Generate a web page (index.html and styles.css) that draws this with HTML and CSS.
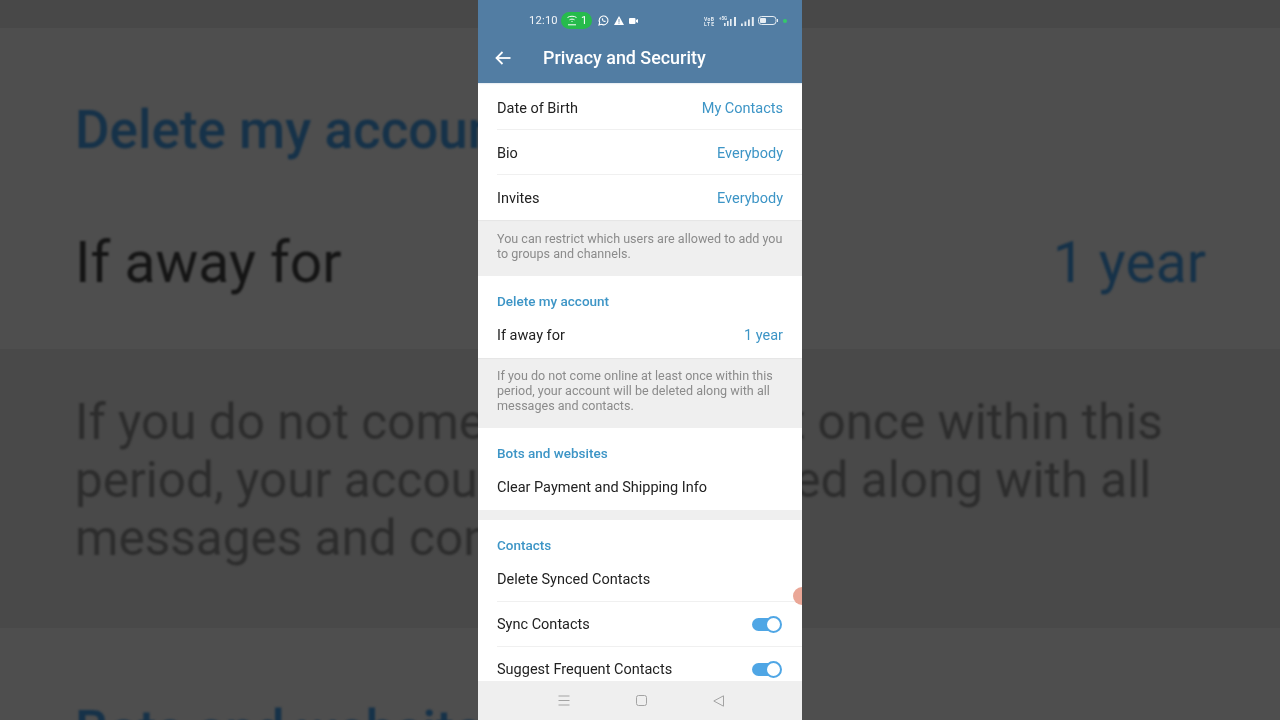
FILE: index.html
```html
<!DOCTYPE html>
<html lang="en">
<head>
<meta charset="utf-8">
<title>Privacy and Security</title>
<link rel="stylesheet" href="styles.css">
</head>
<body>
<div class="stage">
  <div class="backdrop">
    <div class="band band-top"></div>
    <div class="band band-account">
      <div class="bg-heading">Delete my account</div>
      <div class="bg-row"><span>If away for</span><span class="bg-value">1 year</span></div>
    </div>
    <div class="band band-note">
      <p class="bg-note">If you do not come online at least once within this period, your account will be deleted along with all messages and contacts.</p>
    </div>
    <div class="band band-bots">
      <div class="bg-heading">Bots and websites</div>
    </div>
  </div>

  <main class="phone">
    <header class="appbar">
      <div class="status">
        <div class="status-left">
          <span class="clock">12:10</span>
          <span class="pill">
            <svg width="12" height="11" viewBox="0 0 12 11" fill="none" stroke="#fff" stroke-width="1"><path d="M1.500 2.500C4 .8 8 .8 10.500 2.500"/><path d="M3.500 4.800C5 3.900 7 3.900 8.500 4.800"/><path d="M5.500 6.500h1"/><path d="M2 9.800h8"/></svg>
            <span>1</span>
          </span>
          <svg class="ic-wa" width="11" height="11" viewBox="0 0 11 11" fill="none" stroke="#fff" stroke-width="1.100"><path d="M1 10l.7-2.500A4.400 4.400 0 1 1 3.500 9.300z"/><path d="M3.800 3.400c-.4 1.800 1.700 3.900 3.600 3.600l.3-1-1-.5-.5.500c-.6-.3-1-.8-1.300-1.300l.5-.5-.5-1z" fill="#fff" stroke="none"/></svg>
          <svg class="ic-warn" width="10" height="9" viewBox="0 0 10 9"><path d="M5 0l5 9H0z" fill="#fff"/><path d="M4.600 3h.8v3.200h-.8zM4.600 6.800h.8v.9h-.8z" fill="#527da3"/></svg>
          <svg class="ic-cam" width="9" height="6" viewBox="0 0 9 6"><rect width="6.500" height="6" rx="1" fill="#fff"/><path d="M7 2l2-1v4L7 4z" fill="#fff"/></svg>
        </div>
        <div class="status-right">
          <svg class="ic-vob" width="10" height="10" viewBox="0 0 10 10" fill="#e6edf3" font-family="Roboto, sans-serif" font-size="5" font-weight="700"><text x="0" y="4.500" textLength="10">VoB</text><text x="0" y="9.500" textLength="10">LTE</text></svg>
          <svg class="ic-5g" width="18" height="10" viewBox="0 0 18 10" fill="#e6edf3"><text x="0" y="4" font-family="Roboto, sans-serif" font-size="4.500" font-weight="700" textLength="8">+5G</text><rect x="5" y="7" width="1.600" height="3"/><rect x="8" y="5" width="1.600" height="5"/><rect x="11" y="3" width="1.600" height="7"/><rect x="15" y="1" width="2" height="9"/></svg>
          <svg class="ic-sig" width="13" height="10" viewBox="0 0 13 10" fill="#e6edf3"><rect x="0" y="7.500" width="1.800" height="2.500"/><rect x="3.500" y="5.500" width="1.800" height="4.500"/><rect x="7" y="3.500" width="1.800" height="6.500"/><rect x="10.800" y="1" width="2" height="9"/></svg>
          <svg class="ic-bat" width="20" height="9" viewBox="0 0 20 9"><rect x=".5" y=".5" width="17.500" height="8" rx="3" fill="none" stroke="#e6edf3"/><rect x="2" y="2" width="6" height="5" rx="1" fill="#e6edf3"/><rect x="19" y="3" width="1" height="3" fill="#e6edf3"/></svg>
          <span class="status-dot"></span>
        </div>
      </div>
      <div class="toolbar">
        <svg class="back" width="16" height="14" viewBox="0 0 16 14" fill="none" stroke="#fff" stroke-width="1.800"><path d="M15.500 7H1.800"/><path d="M7.500 1L1.500 7l6 6"/></svg>
        <h1 class="title">Privacy and Security</h1>
      </div>
    </header>

    <div class="list">
      <section class="card card-first">
        <div class="row line"><span>Date of Birth</span><span class="value">My Contacts</span></div>
        <div class="row line"><span>Bio</span><span class="value">Everybody</span></div>
        <div class="row"><span>Invites</span><span class="value">Everybody</span></div>
      </section>
      <p class="note note-invites">You can restrict which users are allowed to add you to groups and channels.</p>
      <section class="card">
        <h2 class="heading">Delete my account</h2>
        <div class="row"><span>If away for</span><span class="value">1 year</span></div>
      </section>
      <p class="note note-away">If you do not come online at least once within this period, your account will be deleted along with all messages and contacts.</p>
      <section class="card">
        <h2 class="heading">Bots and websites</h2>
        <div class="row"><span>Clear Payment and Shipping Info</span></div>
      </section>
      <div class="gap"></div>
      <section class="card">
        <h2 class="heading">Contacts</h2>
        <div class="row line"><span>Delete Synced Contacts</span></div>
        <div class="row line"><span>Sync Contacts</span><span class="toggle"></span></div>
        <div class="row"><span>Suggest Frequent Contacts</span><span class="toggle"></span></div>
      </section>
    </div>

    <span class="touch"></span>

    <nav class="navbar">
      <svg width="12" height="11" viewBox="0 0 12 11" fill="none" stroke="#a3a3a3" stroke-width="1"><path d="M.5 1h11M.5 5.500h11M.5 10h11"/></svg>
      <svg width="11" height="11" viewBox="0 0 11 11" fill="none" stroke="#a3a3a3" stroke-width="1"><rect x=".5" y=".5" width="10" height="10" rx="2"/></svg>
      <svg width="11" height="12" viewBox="0 0 11 12" fill="none" stroke="#a3a3a3" stroke-width="1"><path d="M10.500 .8v10.400L.8 6z" stroke-linejoin="round"/></svg>
    </nav>
  </main>
</div>
</body>
</html>
```
FILE: styles.css
```css
* { box-sizing: border-box; }
html, body { margin: 0; padding: 0; }
body { background: #4e4e4e; font-family: Roboto, "Liberation Sans", sans-serif; }
.stage {
  position: relative;
  width: 1280px;
  height: 720px;
  overflow: hidden;
  display: flex;
  justify-content: center;
}

/* blurred, enlarged copy of the screen behind the phone */
.backdrop {
  position: absolute;
  inset: 0;
  display: flex;
  flex-direction: column;
  background: #4e4e4e;
}
.band { flex: none; padding: 0 74px 0 75px; overflow: hidden; }
.band-top { height: 28px; background: #484848; }
.band-account { height: 321px; background: #4e4e4e; padding-top: 70px; }
.band-note { height: 279px; background: #494949; padding-top: 44px; }
.band-bots { height: 92px; background: #4e4e4e; padding-top: 70px; }
.bg-heading, .bg-row, .bg-note { filter: blur(1.300px); }
.bg-heading { font-size: 53px; line-height: 64px; font-weight: 500; color: #163249; white-space: nowrap; }
.bg-row {
  display: flex;
  justify-content: space-between;
  margin-top: 69px;
  font-size: 57px;
  line-height: 64px;
  color: #151515;
}
.bg-value { color: #163249; }
.bg-note { margin: 0; font-size: 49.500px; line-height: 58px; color: #2d2d2d; width: 1130px; }

/* phone */
.phone {
  position: relative;
  z-index: 1;
  width: 324px;
  height: 720px;
  display: flex;
  flex-direction: column;
  background: #efefef;
  overflow: hidden;
}
.appbar { flex: none; height: 83px; background: #527da3; color: #fff; box-shadow: 0 1px 1px rgba(82,125,163,.12); position: relative; z-index: 1; }
.status { height: 40px; display: flex; justify-content: space-between; align-items: center; padding: 1px 15px 0 51px; filter: blur(.3px); }
.status-left, .status-right { display: flex; align-items: center; }
.clock { font-size: 11.200px; letter-spacing: .2px; width: 32px; color: #f2f5f8; }
.pill {
  width: 31px;
  height: 17px;
  border-radius: 9px;
  background: #26bb4c;
  display: flex;
  align-items: center;
  justify-content: center;
  gap: 3px;
  font-size: 11px;
}
.ic-wa { margin-left: 6px; }
.ic-warn { margin-left: 5px; }
.ic-cam { margin-left: 5px; }
.ic-5g { margin-left: 5px; }
.ic-sig, .ic-bat { margin-left: 4px; }
.status-dot { width: 4px; height: 4px; border-radius: 50%; background: #35c96a; margin-left: 5px; }
.toolbar { height: 43px; display: flex; align-items: center; padding: 0 0 8px 17px; }
.title { margin: 0 0 0 32px; font-size: 17.900px; font-weight: 500; color: #fff; filter: blur(.25px); }

.list { flex: 1; min-height: 0; overflow: hidden; padding-top: 2px; background: #fff; filter: blur(.3px); }
.card { background: #fff; }
.row {
  position: relative;
  height: 45px;
  display: flex;
  align-items: center;
  justify-content: space-between;
  padding: 0 19px;
  font-size: 14.500px;
  color: #222;
}
.card-first .row { padding-top: 2px; }
.line::after {
  content: "";
  position: absolute;
  left: 19px;
  right: 0;
  bottom: 0;
  height: 1px;
  background: #f0f0f0;
}
.value { color: #3d95c6; }
.heading { margin: 0; height: 37px; padding: 16px 19px 0; font-size: 13.500px; line-height: 18px; font-weight: 500; color: #3d95c6; }
.note {
  margin: 0;
  padding: 11px 18px 0 19px;
  font-size: 12.550px;
  line-height: 15px;
  color: #8b8b8b;
  background: #efefef;
  box-shadow: inset 0 1px 1px rgba(0,0,0,.04);
}
.note-invites { height: 56px; }
.note-away { height: 70px; padding-top: 10px; }
.gap { height: 10px; background: #efefef; }
.toggle { position: relative; width: 26px; height: 13px; margin-right: 5px; border-radius: 7px; background: #4fa6e5; }
.toggle::after {
  content: "";
  box-sizing: border-box;
  position: absolute;
  right: -4px;
  top: -2px;
  width: 17px;
  height: 17px;
  border-radius: 50%;
  background: #fff;
  border: 2px solid #4fa6e5;
}
.touch { position: absolute; left: 315px; top: 587px; width: 18px; height: 18px; border-radius: 50%; background: #eaa797; z-index: 2; }
.navbar {
  flex: none;
  height: 39px;
  background: #efefef;
  display: flex;
  justify-content: center;
  align-items: center;
  gap: 66px;
  padding-left: 2px;
  position: relative;
  z-index: 1;
}
```
